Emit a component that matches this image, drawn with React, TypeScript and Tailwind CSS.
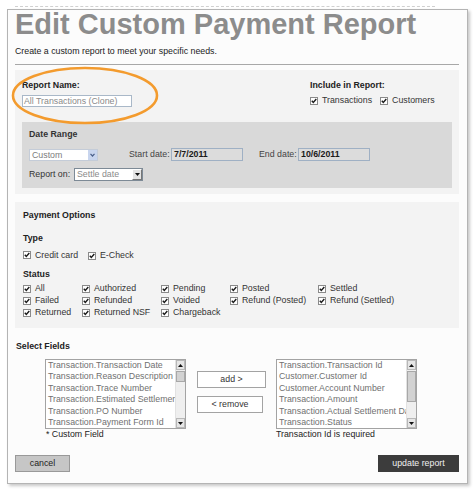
import React from "react";

const Check = () => (
  <span className="inline-flex w-[8px] h-[8px] shrink-0 border border-[#8a8a8a] bg-white items-center justify-center">
    <svg width="6" height="6" viewBox="0 0 6 6">
      <path d="M0.8 2.8 L2.3 4.5 L5.3 1" stroke="#1a1a1a" strokeWidth="1.4" fill="none" />
    </svg>
  </span>
);

const CB = ({ label }: { label: string }) => (
  <span className="inline-flex items-center gap-[4px] whitespace-nowrap">
    <Check />
    <span>{label}</span>
  </span>
);

const ScrollBar = ({ thumbTop, thumbH }: { thumbTop: number; thumbH: number }) => (
  <div className="w-[10px] h-full bg-[#efefef] flex flex-col border-l border-[#e2e2e2]">
    <div className="h-[10px] bg-[#e6e6e6] border border-[#b8b8b8] flex items-center justify-center">
      <svg width="5" height="3" viewBox="0 0 5 3"><path d="M0 3 L2.5 0 L5 3 Z" fill="#111" /></svg>
    </div>
    <div className="flex-1 relative">
      <div
        className="absolute left-0 right-0 bg-[#d2d2d2] border border-[#a8a8a8]"
        style={{ top: thumbTop, height: thumbH }}
      />
    </div>
    <div className="h-[10px] bg-[#e6e6e6] border border-[#b8b8b8] flex items-center justify-center">
      <svg width="5" height="3" viewBox="0 0 5 3"><path d="M0 0 L2.5 3 L5 0 Z" fill="#111" /></svg>
    </div>
  </div>
);

const ListBox = ({ items, thumbTop, thumbH }: { items: string[]; thumbTop: number; thumbH: number }) => (
  <div className="w-[141px] h-[70px] border border-[#a3a3a3] bg-white flex">
    <div className="flex-1 overflow-hidden pl-[2px] text-[#707070] text-[8.8px]">
      {items.map((t) => (
        <div key={t} className="h-[11.4px] leading-[11.4px] whitespace-nowrap">{t}</div>
      ))}
    </div>
    <ScrollBar thumbTop={thumbTop} thumbH={thumbH} />
  </div>
);

export default function App() {
  return (
    <div className="relative w-[475px] min-h-[495px] bg-white pt-[6px] [font-family:'Liberation_Sans',Arial,sans-serif] text-[8.8px] text-[#333]">
      <div className="ml-[15px] w-[420px] h-0 border-t border-dashed border-[#d0d0d0]" />
      <div className="ml-[7px] mt-[2px] w-[461px] h-[475px] border border-[#b4b4b4] bg-[#fcfcfc] shadow-[2px_2px_3px_rgba(0,0,0,0.22)] pl-[7px] pr-[8px]">
        <div className="h-[29px] leading-[29px] text-[29px] font-bold text-[#8c8c8c] whitespace-nowrap">
          Edit Custom Payment Report
        </div>
        <div className="mt-[7px] h-[11px] leading-[11px] text-[#222]">
          Create a custom report to meet your specific needs.
        </div>
        <div className="mt-[7px] h-px bg-[#a8a8a8]" />

        {/* Section 1 */}
        <div className="mt-[5px] h-[124px] bg-[#f3f3f3] pt-[10px]">
          <div className="flex pl-[7px]">
            <div className="w-[288px]">
              <div className="h-[11px] leading-[11px] font-bold text-[#222]">Report Name:</div>
              <div className="mt-[4px] w-[110px] h-[12px] border border-[#a9b8c8] bg-white text-[#8a8a8a] pl-[1px] leading-[10px] whitespace-nowrap">
                All Transactions (Clone)
              </div>
            </div>
            <div>
              <div className="h-[11px] leading-[11px] font-bold text-[#222]">Include in Report:</div>
              <div className="mt-[4px] h-[11px] flex items-center gap-[8px]">
                <CB label="Transactions" />
                <CB label="Customers" />
              </div>
            </div>
          </div>
          <div className="mt-[15px] mx-[7px] h-[66px] bg-[#d9d9d9] pl-[7px] pt-[7px]">
            <div className="h-[11px] leading-[11px] font-bold text-[#333]">Date Range</div>
            <div className="mt-[8px] h-[13px] flex items-center">
              <div className="w-[69px] h-[12px] bg-white border border-[#c4ccd8] flex items-center">
                <span className="flex-1 pl-[2px] text-[#7c7c7c] leading-[10px]">Custom</span>
                <span className="w-[9px] h-[10px] bg-[#c8d5ee] flex items-center justify-center">
                  <svg width="5" height="4" viewBox="0 0 5 4"><path d="M0.5 0.8 L2.5 3 L4.5 0.8" stroke="#4a5f8a" strokeWidth="1.2" fill="none" /></svg>
                </span>
              </div>
              <span className="ml-[31px] w-[42px] text-[#444] whitespace-nowrap">Start date:</span>
              <div className="w-[72px] h-[13px] border border-[#9fb0c4] bg-[#dcdcdc] font-bold text-[#1a1a1a] pl-[2px] leading-[11px]">7/7/2011</div>
              <span className="ml-[16px] w-[39px] text-[#444] whitespace-nowrap">End date:</span>
              <div className="w-[72px] h-[13px] border border-[#9fb0c4] bg-[#dcdcdc] font-bold text-[#1a1a1a] pl-[2px] leading-[11px]">10/6/2011</div>
            </div>
            <div className="mt-[7px] h-[13px] flex items-center">
              <span className="w-[45px] text-[#333] whitespace-nowrap">Report on:</span>
              <div className="w-[69px] h-[13px] bg-white border border-[#7d8a96] flex items-center">
                <span className="flex-1 pl-[2px] text-[#8a8a8a] leading-[11px]">Settle date</span>
                <span className="w-[10px] h-[11px] bg-[#e4e4e4] border-l border-t border-[#fff] border-r-[#777] border-b-[#777] border-r border-b flex items-center justify-center">
                  <svg width="5" height="3" viewBox="0 0 5 3"><path d="M0 0 L2.5 3 L5 0 Z" fill="#111" /></svg>
                </span>
              </div>
            </div>
          </div>
        </div>

        {/* Section 2 */}
        <div className="mt-[8px] h-[126px] bg-[#f3f3f3] pl-[8px] pt-[8px] text-[#333]">
          <div className="h-[11px] leading-[11px] font-bold text-[#222]">Payment Options</div>
          <div className="mt-[12px] h-[11px] leading-[11px] font-bold text-[#222]">Type</div>
          <div className="mt-[6px] h-[11px] flex items-center">
            <div className="w-[65px]"><CB label="Credit card" /></div>
            <CB label="E-Check" />
          </div>
          <div className="mt-[8px] h-[11px] leading-[11px] font-bold text-[#222]">Status</div>
          <div className="mt-[3px] grid grid-cols-[59px_79px_69px_88px_auto] auto-rows-[12px] items-center">
            <CB label="All" />
            <CB label="Authorized" />
            <CB label="Pending" />
            <CB label="Posted" />
            <CB label="Settled" />
            <CB label="Failed" />
            <CB label="Refunded" />
            <CB label="Voided" />
            <CB label="Refund (Posted)" />
            <CB label="Refund (Settled)" />
            <CB label="Returned" />
            <CB label="Returned NSF" />
            <CB label="Chargeback" />
          </div>
        </div>

        {/* Select fields */}
        <div className="mt-[13px] pl-[1px] h-[11px] leading-[11px] font-bold text-[#222]">Select Fields</div>
        <div className="mt-[7px] flex">
          <div className="ml-[30px]">
            <ListBox
              items={[
                "Transaction.Transaction Date",
                "Transaction.Reason Description",
                "Transaction.Trace Number",
                "Transaction.Estimated Settlement Date",
                "Transaction.PO Number",
                "Transaction.Payment Form Id",
              ]}
              thumbTop={1}
              thumbH={11}
            />
          </div>
          <div className="ml-[11px] w-[69px] pt-[12px] flex flex-col">
            <div className="w-[69px] h-[17px] border border-[#a3a3a3] bg-white flex items-center justify-center text-[#333]">add &gt;</div>
            <div className="mt-[8px] w-[66px] h-[17px] border border-[#a3a3a3] bg-white flex items-center justify-center text-[#333]">&lt; remove</div>
          </div>
          <div className="ml-[10px]">
            <ListBox
              items={[
                "Transaction.Transaction Id",
                "Customer.Customer Id",
                "Customer.Account Number",
                "Transaction.Amount",
                "Transaction.Actual Settlement Date",
                "Transaction.Status",
              ]}
              thumbTop={1}
              thumbH={31}
            />
          </div>
        </div>
        <div className="h-[11px] leading-[11px] flex text-[#222]">
          <span className="ml-[31px] w-[230px]">* Custom Field</span>
          <span>Transaction Id is required</span>
        </div>
        <div className="mt-[15px] flex">
          <div className="w-[55px] h-[17px] bg-[#c6c6c6] border border-[#999] flex items-center justify-center text-[#222]">cancel</div>
          <div className="ml-auto w-[81px] h-[17px] bg-[#3c3c3c] flex items-center justify-center text-[#f0f0f0]">update report</div>
        </div>
      </div>

      <svg className="absolute left-[11px] top-[66px] pointer-events-none" width="148" height="59" viewBox="0 0 148 59">
        <ellipse cx="74" cy="29.5" rx="72" ry="27.5" fill="none" stroke="#f39b2e" strokeWidth="2.6" />
      </svg>
    </div>
  );
}
